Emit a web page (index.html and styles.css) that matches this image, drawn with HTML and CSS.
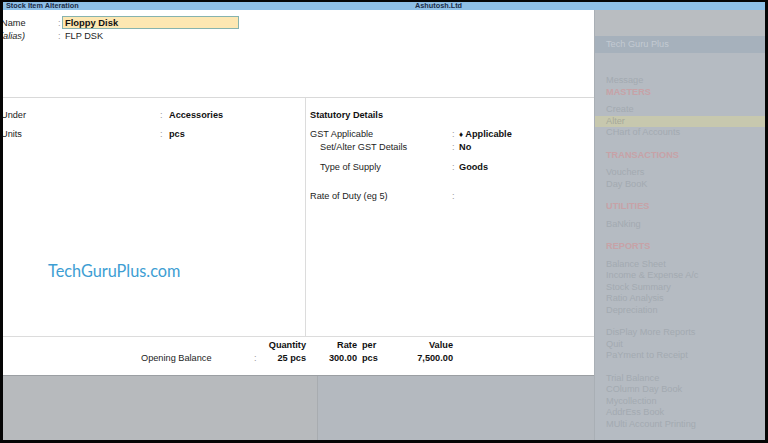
FILE: index.html
```html
<!DOCTYPE html>
<html>
<head>
<meta charset="utf-8">
<title>Stock Item Alteration</title>
<link rel="stylesheet" href="styles.css">
</head>
<body>
<div class="screen">
  <div class="titlebar">
    <span class="t-title">Stock Item Alteration</span>
    <span class="t-company">Ashutosh.Ltd</span>
  </div>
  <div class="main">
    <div class="work">
      <div class="form">
        <div class="head">
          <div class="hrow">
            <span class="hlabel">Name</span><span class="hcolon">:</span><span class="namebox">Floppy Disk</span>
          </div>
          <div class="hrow">
            <span class="hlabel alias">(alias)</span><span class="hcolon">:</span><span class="hval">FLP DSK</span>
          </div>
        </div>
        <div class="body">
          <div class="col-left">
            <div class="lrow"><span class="llabel">Under</span><span class="colon">:</span><b class="val">Accessories</b></div>
            <div class="lrow"><span class="llabel">Units</span><span class="colon">:</span><b class="val">pcs</b></div>
            <div class="brand">TechGuruPlus.com</div>
          </div>
          <div class="col-right">
            <div class="stat-title">Statutory Details</div>
            <div class="srow gap-a"><span class="slabel">GST Applicable</span><span class="colon">:</span><b class="val"><span class="dia">&#9830;</span> Applicable</b></div>
            <div class="srow sub"><span class="slabel">Set/Alter GST Details</span><span class="colon">:</span><b class="val">No</b></div>
            <div class="srow sub gap-b"><span class="slabel">Type of Supply</span><span class="colon">:</span><b class="val">Goods</b></div>
            <div class="srow gap-c"><span class="slabel">Rate of Duty (eg 5)</span><span class="colon">:</span><b class="val"></b></div>
          </div>
        </div>
        <div class="ob">
          <div class="obgrid">
            <span></span><span></span><b class="r">Quantity</b><b class="r">Rate</b><span></span><b>per</b><b class="r">Value</b>
            <span class="oblabel">Opening Balance</span><span class="colon">:</span><b class="r">25 pcs</b><b class="r">300.00</b><span></span><b>pcs</b><b class="r">7,500.00</b>
          </div>
        </div>
      </div>
      <div class="under">
        <div class="under-a"></div>
        <div class="under-b"></div>
      </div>
    </div>
    <div class="menu">
      <div class="menu-top"></div>
      <div class="menu-band">Tech Guru Plus</div>
      <div class="menu-list">
        <div class="grp first">
          <div class="item">Message</div>
          <div class="mhead">MASTERS</div>
          <div class="item">Create</div>
          <div class="item hl">Alter</div>
          <div class="item">CHart of Accounts</div>
        </div>
        <div class="grp">
          <div class="mhead">TRANSACTIONS</div>
          <div class="item">Vouchers</div>
          <div class="item">Day BooK</div>
        </div>
        <div class="grp">
          <div class="mhead">UTILITIES</div>
          <div class="item">BaNking</div>
        </div>
        <div class="grp">
          <div class="mhead">REPORTS</div>
          <div class="item">Balance Sheet</div>
          <div class="item">Income &amp; Expense A/c</div>
          <div class="item">Stock Summary</div>
          <div class="item">Ratio Analysis</div>
          <div class="item">Depreciation</div>
        </div>
        <div class="grp">
          <div class="item">DisPlay More Reports</div>
          <div class="item">Quit</div>
          <div class="item">PaYment to Receipt</div>
        </div>
        <div class="grp">
          <div class="item">Trial Balance</div>
          <div class="item">COlumn Day Book</div>
          <div class="item">Mycollection</div>
          <div class="item">AddrEss Book</div>
          <div class="item">MUlti Account Printing</div>
        </div>
      </div>
    </div>
  </div>
</div>
</body>
</html>
```
FILE: styles.css
```css
* { box-sizing: border-box; }
html, body { margin: 0; padding: 0; background: #000; }
body { font-family: "Liberation Sans", Arial, sans-serif; font-size: 9.2px; color: #1c1c1c; }

.screen {
  width: 768px;
  height: 443px;
  background: #050505;
  padding: 2px 3px 3px 3px;
  display: flex;
  flex-direction: column;
  overflow: hidden;
}

.titlebar {
  height: 8px;
  background: #8ec0e7;
  display: flex;
  align-items: center;
  font-weight: bold;
  font-size: 7.3px;
  line-height: 8px;
  color: #1b2c48;
  padding-left: 3px;
}
.t-title { width: 409px; }

.main { display: flex; height: 430px; }

.work { width: 591px; display: flex; flex-direction: column; }

.form {
  height: 366px;
  background: #fff;
  border-bottom: 1px solid #9b9fa3;
  display: flex;
  flex-direction: column;
  overflow: hidden;
}

.head {
  height: 88px;
  border-bottom: 1px solid #d9d9d9;
  padding-top: 6px;
}
.hrow { display: flex; align-items: center; height: 13px; }
.hlabel { width: 57px; margin-left: -2px; }
.hlabel.alias { font-style: italic; margin-left: -3px; width: 58px; }
.hcolon { width: 4px; color: #9a9a9a; }
.namebox {
  width: 177px;
  height: 13px;
  line-height: 11px;
  background: #fde7b2;
  border: 1px solid #86b3ae;
  padding-left: 2px;
  font-weight: bold;
  font-size: 9.4px;
  color: #111;
}
.hval { padding-left: 3px; }

.body { height: 238px; display: flex; }
.col-left { width: 303px; border-right: 1px solid #dcdcdc; padding-top: 8px; }
.lrow { display: flex; line-height: 19px; }
.llabel { width: 159px; margin-left: -2px; }
.colon { color: #9a9a9a; }
.lrow .colon { width: 9px; }
.val { color: #111; }

.brand {
  margin-top: 117px;
  margin-left: 45px;
  font-family: Lato, "Open Sans", sans-serif;
  font-size: 16.3px;
  line-height: 20px;
  color: #3d9ed3;
}

.col-right { flex: 1; padding-top: 11px; padding-left: 4px; }
.stat-title { font-weight: bold; line-height: 12px; color: #111; }
.srow { display: flex; line-height: 12px; }
.slabel { width: 142px; }
.srow .colon { width: 7px; }
.srow.sub .slabel { width: 132px; margin-left: 10px; }
.gap-a { margin-top: 7px; }
.gap-b { margin-top: 8px; }
.gap-c { margin-top: 17px; }
.dia { font-size: 8px; }

.ob { flex: 1; border-top: 1px solid #dcdcdc; padding-top: 2px; padding-left: 138px; }
.obgrid {
  display: grid;
  grid-template-columns: 113px 12px 40px 51px 5px 23px 68px;
  line-height: 13px;
}
.obgrid b { color: #111; }
.r { text-align: right; }

.under { flex: 1; display: flex; }
.under-a { width: 315px; background: #b7babd; border-right: 1px solid #a8acb0; }
.under-b { flex: 1; background: #b4b9bf; }

.menu { flex: 1; display: flex; flex-direction: column; background: #b5bbc2; border-left: 1px solid #a9afb5; }
.menu-top { height: 26px; background: #b9bdc1; }
.menu-band {
  height: 17px;
  line-height: 17px;
  background: #a6b1bc;
  color: #c3cad2;
  padding-left: 11px;
}
.menu-list { padding-top: 22px; line-height: 11.5px; }
.grp { margin-top: 11px; }
.grp.first { margin-top: 0; }
.item { padding-left: 11px; color: #a3aab1; }
.item.hl { background: #c7c8ae; color: #a6a99a; }
.mhead { padding-left: 11px; font-weight: bold; color: #c7a2a7; margin-bottom: 6px; }
```
